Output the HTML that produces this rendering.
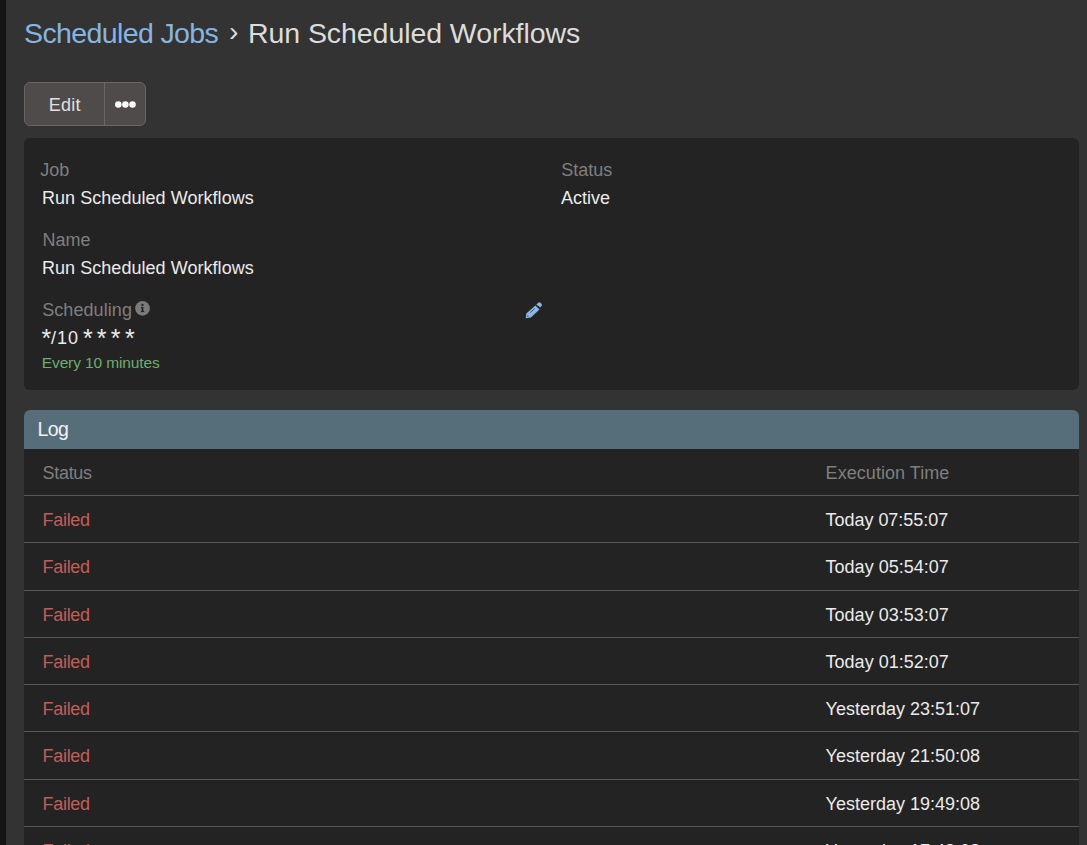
<!DOCTYPE html>
<html><head><meta charset="utf-8">
<style>
*{margin:0;padding:0;box-sizing:border-box}
html,body{width:1087px;height:845px;overflow:hidden;background:#333333;font-family:"Liberation Sans",sans-serif}
.strip{position:absolute;left:0;top:0;width:6px;height:845px;background:#151515}
.t{position:absolute;white-space:nowrap;line-height:1}
.btn{position:absolute;left:24px;top:82px;width:122px;height:44px;background:#4f4b4a;border:1px solid #6a6665;border-radius:6px}
.btn .div{position:absolute;left:79px;top:0;width:1px;height:42px;background:#6a6665}
.card{position:absolute;left:24px;top:138px;width:1055px;height:252px;background:#232323;border-radius:6px}
.log{position:absolute;left:24px;top:410px;width:1055px;height:440px;background:#232323;border-radius:6px 6px 0 0;overflow:hidden}
.loghead{position:absolute;left:0;top:0;width:1055px;height:39px;background:#566e7a}
.line{position:absolute;left:0;width:1055px;height:1px;background:#5c5756}
.info{position:absolute;left:135.3px;top:301px}
</style></head><body>
<div class="strip"></div>
<div class="btn"><div class="div"></div></div>
<div class="card"></div>
<div class="log">
<div class="loghead"></div>
<div class="line" style="top:85px"></div>
<div class="line" style="top:132px"></div>
<div class="line" style="top:180px"></div>
<div class="line" style="top:227px"></div>
<div class="line" style="top:274px"></div>
<div class="line" style="top:321px"></div>
<div class="line" style="top:369px"></div>
<div class="line" style="top:416px"></div>
</div>
<div class="t" style="left:24.00px;top:18.67px;font-size:28.50px;color:#86b5e2;letter-spacing:-0.615px">Scheduled Jobs</div>
<div class="t" style="left:229.00px;top:16.67px;font-size:28.50px;color:#dcdcdc;letter-spacing:0.000px">›</div>
<div class="t" style="left:248.00px;top:18.67px;font-size:28.50px;color:#dcdcdc;letter-spacing:-0.068px">Run Scheduled Workflows</div>
<div class="t" style="left:48.80px;top:95.56px;font-size:18.00px;color:#e0e0e0;letter-spacing:0.200px">Edit</div>
<div class="t" style="left:40.20px;top:160.96px;font-size:18.00px;color:#7f7f7f;letter-spacing:0.000px">Job</div>
<div class="t" style="left:42.00px;top:188.66px;font-size:18.00px;color:#ebebeb;letter-spacing:0.045px">Run Scheduled Workflows</div>
<div class="t" style="left:561.20px;top:160.76px;font-size:18.00px;color:#7f7f7f;letter-spacing:0.020px">Status</div>
<div class="t" style="left:561.00px;top:188.66px;font-size:18.00px;color:#ebebeb;letter-spacing:0.000px">Active</div>
<div class="t" style="left:42.60px;top:230.66px;font-size:18.00px;color:#7f7f7f;letter-spacing:0.000px">Name</div>
<div class="t" style="left:42.00px;top:258.76px;font-size:18.00px;color:#ebebeb;letter-spacing:0.045px">Run Scheduled Workflows</div>
<div class="t" style="left:42.20px;top:300.56px;font-size:18.00px;color:#7f7f7f;letter-spacing:0.078px">Scheduling</div>
<div class="t" style="left:51.00px;top:328.76px;font-size:18.00px;color:#ebebeb;letter-spacing:1.050px">/10</div>
<div class="t" style="left:41.40px;top:325.73px;font-size:25.00px;color:#ebebeb;letter-spacing:0.000px">*</div>
<div class="t" style="left:83.00px;top:325.73px;font-size:25.00px;color:#ebebeb;letter-spacing:0.000px">*</div>
<div class="t" style="left:96.80px;top:325.73px;font-size:25.00px;color:#ebebeb;letter-spacing:0.000px">*</div>
<div class="t" style="left:110.80px;top:325.73px;font-size:25.00px;color:#ebebeb;letter-spacing:0.000px">*</div>
<div class="t" style="left:125.00px;top:325.73px;font-size:25.00px;color:#ebebeb;letter-spacing:0.000px">*</div>
<div class="t" style="left:41.80px;top:354.88px;font-size:15.50px;color:#6fac70;letter-spacing:-0.127px">Every 10 minutes</div>
<div class="t" style="left:37.60px;top:420.39px;font-size:19.50px;color:#f2f2f2;letter-spacing:-0.650px">Log</div>
<div class="t" style="left:42.40px;top:464.46px;font-size:18.00px;color:#7f7f7f;letter-spacing:-0.260px">Status</div>
<div class="t" style="left:825.60px;top:464.46px;font-size:18.00px;color:#7f7f7f;letter-spacing:0.054px">Execution Time</div>
<div class="t" style="left:42.60px;top:510.76px;font-size:18.00px;color:#c25d57;letter-spacing:-0.320px">Failed</div>
<div class="t" style="left:825.60px;top:510.76px;font-size:18.00px;color:#ebebeb;letter-spacing:-0.038px">Today 07:55:07</div>
<div class="t" style="left:42.60px;top:557.76px;font-size:18.00px;color:#c25d57;letter-spacing:-0.320px">Failed</div>
<div class="t" style="left:825.60px;top:557.76px;font-size:18.00px;color:#ebebeb;letter-spacing:0.000px">Today 05:54:07</div>
<div class="t" style="left:42.60px;top:605.76px;font-size:18.00px;color:#c25d57;letter-spacing:-0.320px">Failed</div>
<div class="t" style="left:825.60px;top:605.76px;font-size:18.00px;color:#ebebeb;letter-spacing:0.000px">Today 03:53:07</div>
<div class="t" style="left:42.60px;top:652.76px;font-size:18.00px;color:#c25d57;letter-spacing:-0.320px">Failed</div>
<div class="t" style="left:825.60px;top:652.76px;font-size:18.00px;color:#ebebeb;letter-spacing:0.000px">Today 01:52:07</div>
<div class="t" style="left:42.60px;top:699.76px;font-size:18.00px;color:#c25d57;letter-spacing:-0.320px">Failed</div>
<div class="t" style="left:825.60px;top:699.76px;font-size:18.00px;color:#ebebeb;letter-spacing:0.000px">Yesterday 23:51:07</div>
<div class="t" style="left:42.60px;top:746.76px;font-size:18.00px;color:#c25d57;letter-spacing:-0.320px">Failed</div>
<div class="t" style="left:825.60px;top:746.76px;font-size:18.00px;color:#ebebeb;letter-spacing:0.000px">Yesterday 21:50:08</div>
<div class="t" style="left:42.60px;top:794.76px;font-size:18.00px;color:#c25d57;letter-spacing:-0.320px">Failed</div>
<div class="t" style="left:825.60px;top:794.76px;font-size:18.00px;color:#ebebeb;letter-spacing:0.000px">Yesterday 19:49:08</div>
<div class="t" style="left:42.60px;top:841.76px;font-size:18.00px;color:#c25d57;letter-spacing:-0.320px">Failed</div>
<div class="t" style="left:825.60px;top:841.76px;font-size:18.00px;color:#ebebeb;letter-spacing:0.000px">Yesterday 17:48:08</div>
<svg style="position:absolute;left:110px;top:95px" width="30" height="20" viewBox="0 0 30 20"><circle cx="8.3" cy="9.4" r="3.25" fill="#fff"/><circle cx="15.4" cy="9.4" r="3.25" fill="#fff"/><circle cx="22.5" cy="9.4" r="3.25" fill="#fff"/></svg>
<svg class="info" width="15" height="15" viewBox="0 0 15 15"><circle cx="7.5" cy="7.4" r="7.35" fill="#7a7a7a"/><rect x="6.6" y="6" width="1.8" height="4.8" fill="#232323"/><rect x="5.9" y="10" width="3.3" height="1.1" fill="#232323"/><rect x="5.9" y="6" width="2.2" height="1" fill="#232323"/><circle cx="7.5" cy="4" r="1.15" fill="#232323"/></svg>
<svg style="position:absolute;left:515px;top:295px" width="40" height="30" viewBox="0 0 40 30"><g fill="#8db6e4"><path d="M20.4 10.5 L24.5 14.4 L15.9 22.6 L10.7 23.3 L11.3 18.6 Z"/><path d="M21.3 9.6 L23.2 7.8 Q24.3 6.8 25.4 7.8 L26.6 9 Q27.5 10 26.5 11 L25.3 12.4 Z"/></g><path d="M19.6 13.6 L15.2 17.6" stroke="#2b3a55" stroke-width="0.8"/><path d="M12.6 20.2 L14 21.3 L12 21.7 Z" fill="#2b3a55"/></svg>
</body></html>
